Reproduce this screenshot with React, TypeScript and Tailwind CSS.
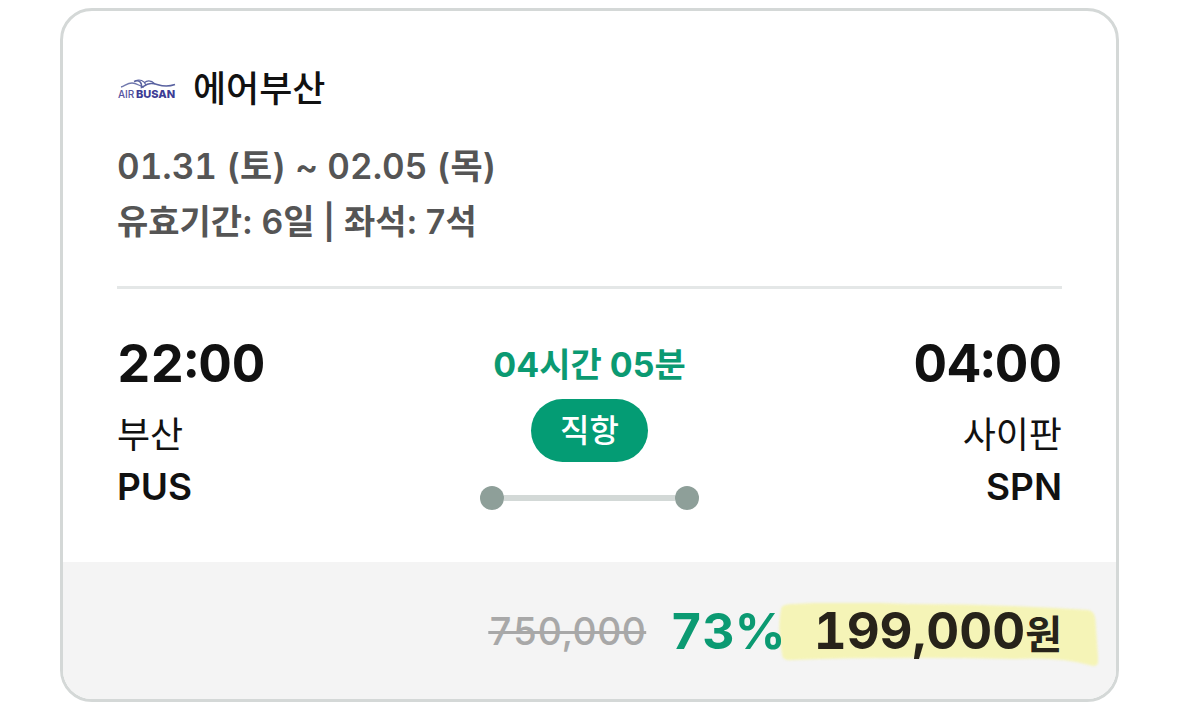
const flight = {
  airline: '에어부산',
  period: '01.31 (토) ~ 02.05 (목)',
  detail: '유효기간: 6일 | 좌석: 7석',
  duration: '04시간 05분',
  type: '직항',
  originalPrice: '750,000',
  discount: '73%',
  price: '199,000',
  from: { time: '22:00', city: '부산', code: 'PUS' },
  to: { time: '04:00', city: '사이판', code: 'SPN' },
}

function AirBusanLogo() {
  return (
    <svg className="w-15 h-6 shrink-0" viewBox="0 0 60 24" fill="none" role="img" aria-label="Air Busan">
      <path d="M4 10C8 9 10 6 15 6C20 6 22 9 27 10" stroke="#7078ad" strokeWidth="1.3" />
      <path d="M17 4.5C22 2.5 25 5 24.5 10.5C27 10 28 7 34 6.5C41 6 45 12 58 7.5" stroke="#5962a0" strokeWidth="1.5" />
      <path d="M18 4C23 1.5 27 4 29 8M27 6C31 2.5 35 4 38 7" stroke="#5962a0" strokeWidth="1.2" />
      <text x="1" y="21" fontFamily="Inter, sans-serif" fontSize="10" fontWeight="500" fill="#5553a0">AIR</text>
      <text x="19" y="21" fontFamily="Inter, sans-serif" fontSize="11" fontWeight="800" fill="#3d3c95">BUSAN</text>
    </svg>
  )
}

function Airport({ airport, align }: { airport: typeof flight.from; align: string }) {
  return (
    <div className={`flex-1 ${align}`}>
      <p className="text-[52px] leading-16 font-bold tabular-nums">{airport.time}</p>
      <p className="mt-3 text-[36px] leading-[54px]">{airport.city}</p>
      <p className="text-[37px] leading-[50px] font-semibold">{airport.code}</p>
    </div>
  )
}

export default function App() {
  return (
    <main className="px-15 pt-2 pb-6 bg-white text-[#111111] font-['Inter','Noto_Sans_CJK_KR',sans-serif]">
      <article className="overflow-hidden rounded-[32px] border-3 border-[#d4d8d7]">
        <div className="px-[54px] pt-[54px] pb-[50px]">
          {/* Airline */}
          <header className="flex items-center gap-4">
            <AirBusanLogo />
            <h1 className="text-[36px] leading-12 font-medium">{flight.airline}</h1>
          </header>

          <div className="mt-[25px] leading-14 font-semibold text-[#555555]">
            <p className="text-[35px] tabular-nums">{flight.period}</p>
            <p className="text-[34px]">{flight.detail}</p>
          </div>

          <hr className="mt-9 border-t-3 border-[#e4e7e7]" />

          {/* Route */}
          <section className="mt-[43px] flex">
            <Airport airport={flight.from} align="text-left" />
            <div className="flex flex-col items-center">
              <p className="text-[34px] leading-[66px] font-bold text-[#0b9a72]">{flight.duration}</p>
              <span className="mt-px rounded-full bg-[#049c74] px-[29px] text-[32px] leading-[63px] font-medium text-white">
                {flight.type}
              </span>
              <div className="mt-6 flex w-[219px] items-center">
                <span className="size-6 rounded-full bg-[#8e9f99]" />
                <span className="h-1.5 flex-1 bg-[#d3d9d7]" />
                <span className="size-6 rounded-full bg-[#8e9f99]" />
              </div>
            </div>
            <Airport airport={flight.to} align="text-right" />
          </section>
        </div>

        {/* Price */}
        <footer className="flex items-center justify-end bg-[#f4f4f4] px-[54px] pt-[37px] pb-9 leading-16 tabular-nums">
          <del className="text-[38px] font-medium text-[#a8a8a8] decoration-3">{flight.originalPrice}</del>
          <strong className="relative z-10 ml-6 text-[50px] font-bold text-[#0b9a72]">{flight.discount}</strong>
          <div className="relative ml-7 text-[#27231a]">
            <svg
              className="absolute -inset-x-9 top-1 h-16 w-[calc(100%+72px)] blur-[1px]"
              viewBox="0 0 318 64"
              preserveAspectRatio="none"
            >
              <path d="M3 6Q3 1 16 1Q60 -2 130 1Q220 1 308 7Q314 8 315 16L318 58Q318 65 309 62Q280 54 235 56Q110 53 14 57Q4 58 4 51Q-1 27 3 6Z" fill="#f5f4b7" />
            </svg>
            <strong className="relative block text-[51px] font-bold">
              {flight.price}
              <span className="text-[40px] leading-none">원</span>
            </strong>
          </div>
        </footer>
      </article>
    </main>
  )
}
